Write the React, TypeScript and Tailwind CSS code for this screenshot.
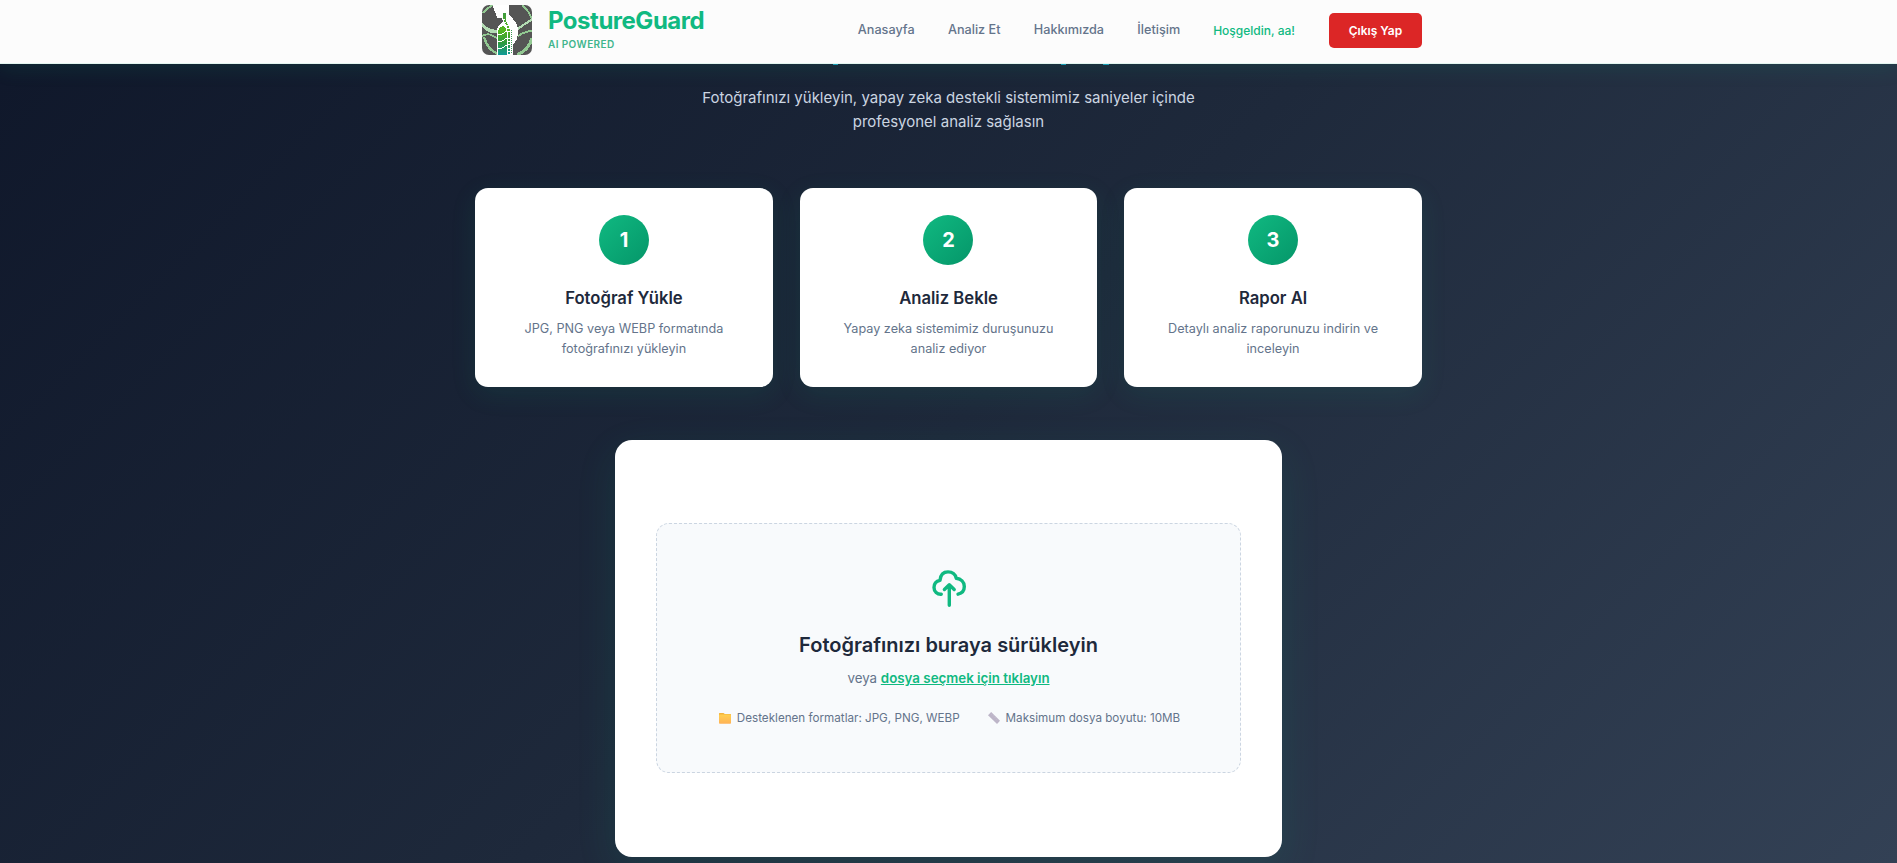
import React from 'react';

const navItems = ['Anasayfa', 'Analiz Et', 'Hakkımızda', 'İletişim'];

const steps = [
  { n: '1', title: 'Fotoğraf Yükle', lines: ['JPG, PNG veya WEBP formatında', 'fotoğrafınızı yükleyin'] },
  { n: '2', title: 'Analiz Bekle', lines: ['Yapay zeka sistemimiz duruşunuzu', 'analiz ediyor'] },
  { n: '3', title: 'Rapor Al', lines: ['Detaylı analiz raporunuzu indirin ve', 'inceleyin'] },
];

function Logo() {
  return (
    <svg className="h-[50px] w-[50px] rounded-[7px]" viewBox="0 0 50 50" shapeRendering="crispEdges">
      <defs>
        <linearGradient id="spine" gradientUnits="userSpaceOnUse" x1="0" y1="8" x2="0" y2="50">
          <stop offset="0" stopColor="#3f9a3f" />
          <stop offset="0.4" stopColor="#55b81c" />
          <stop offset="0.7" stopColor="#2f9a3c" />
          <stop offset="1" stopColor="#0f9a98" />
        </linearGradient>
      </defs>
      <rect width="50" height="50" fill="#555555" />
      <g fill="none" stroke="#92c892" strokeWidth="1.8">
        <path d="M0 31C6 28 9 29 16 34" />
        <path d="M2 32C4 40 9 46 16 49" strokeWidth="2.5" />
        <path d="M1 8C4 4 7 2 11 0" />
        <path d="M40 0C45 4 48 9 50 14" />
        <path d="M36 31C42 27 46 26 50 26" />
        <path d="M50 33C48 41 42 47 35 50" strokeWidth="3" />
      </g>
      <path d="M0 18C4 23 10 25 17 25V28H9C4 26 1 23 0 21ZM36 22C41 20 46 15 50 13V16C45 19 41 21 36 25Z" fill="#b3dcb3" />
      <path
        d="M11 0L12 5L14 9L15 13H20L21 16L17 20L15 24V50H31V40L35 34L36 28V23L34 18L31 14L28 11L27 8V0Z"
        fill="#fff"
      />
      <path d="M18 22L22 21L24 24L25 30V50H16V26Z" fill="url(#spine)" />
      <path d="M15 30L20 29L25 26M15 37L20 36L25 33M15 44L20 43L25 40" fill="none" stroke="#fff" strokeWidth="1" />
      <path d="M22.5 8V13L23.500 17L26 22L27 28V50" fill="none" stroke="url(#spine)" strokeWidth="2.200" strokeDasharray="2.500 .8" />
      <path d="M29.500 25V49" stroke="#3d9a55" strokeWidth="1" strokeDasharray="1 1" />
    </svg>
  );
}

function CloudUp() {
  return (
    <svg className="h-10 w-10" viewBox="0 0 40 40" fill="none" stroke="#10b981" strokeWidth="3.400" strokeLinecap="round" strokeLinejoin="round">
      <path d="M12.3 27.200C8.2 27.500 5 24.500 5 20.500c0-3.7 2.3-6.500 6-7.200C11.500 7.800 14.500 4.900 19 4.900c4.200 0 7.300 2.300 8.300 6.400C32 12 35.300 15.200 35.300 19.500c0 3.900-2.400 6.800-6.300 7.700" />
      <path d="M20.300 38.200V18M15.400 22.500l4.900-4.700L25.200 22.500" />
    </svg>
  );
}

function Folder() {
  return (
    <svg className="h-3 w-3" viewBox="0 0 12 12">
      <defs>
        <linearGradient id="folder" x1="0" y1="0" x2="0" y2="1">
          <stop offset="0" stopColor="#ffd04f" />
          <stop offset="1" stopColor="#ffb257" />
        </linearGradient>
      </defs>
      <path d="M0 1.500Q0 1 .5 1H4.500L5.800 2H11.500Q12 2 12 2.500V5H0Z" fill="#f3b23c" />
      <rect y="2.400" width="12" height="9.400" rx="0.800" fill="url(#folder)" />
    </svg>
  );
}

function Ruler() {
  return (
    <svg className="h-3 w-3" viewBox="0 0 12 12">
      <path d="M3.200 0L12 8.700L9 12L0 3.200Z" fill="#bdb5c8" />
      <path d="M4.300 1.600L3.300 2.600M6 3.300L5 4.300M7.700 5L6.700 6M9.400 6.600L8.400 7.600" stroke="#d0c9d8" strokeWidth=".5" />
    </svg>
  );
}

export default function App() {
  return (
    <div className="flex h-[863px] w-full flex-col overflow-hidden bg-[linear-gradient(135deg,#0f172a_0%,#1e293b_50%,#334155_100%)] font-['Inter',sans-serif]">
      <header className="relative z-10 flex h-16 shrink-0 justify-center border-b border-[#e3f6f0] bg-[#fcfcfc] shadow-[0_3px_20px_rgba(16,185,129,0.13)]">
        <div className="flex w-[947px] items-start justify-between pl-[7px]">
          <div className="flex pt-[5px]">
            <Logo />
            <div className="flex flex-col pl-4">
              <span className="pt-px text-[24px] font-bold leading-[30px] tracking-[-0.48px] text-[#10b981]">PostureGuard</span>
              <span className="pt-px text-[10px] font-semibold leading-[14px] tracking-[0.4px] text-[#40b58c]">AI POWERED</span>
            </div>
          </div>
          <nav className="flex h-[60px] items-center text-[12.670px] font-medium text-[#64748b]">
            <div className="flex gap-[33.300px] pb-px">
              {navItems.map((t) => (
                <span key={t}>{t}</span>
              ))}
            </div>
            <span className="ml-[33px] pt-px text-[12px] text-[#10b981]">Hoşgeldin, aa!</span>
            <button className="ml-[34px] mt-px h-[35px] w-[93px] rounded-[5px] bg-[#dc2626] text-center text-[12px] font-semibold text-white">Çıkış Yap</button>
          </nav>
        </div>
      </header>

      <main className="flex flex-col items-center">
        <svg className="h-[22px] w-[947px] shrink-0" viewBox="475 64 947 22" fill="#189ab8">
          <rect x="833" y="64" width="5" height="1" />
          <rect x="1061" y="64" width="5" height="1" />
          <rect x="1103" y="64" width="6" height="1" />
        </svg>
        <p className="h-[102px] text-center text-[15px] leading-6 text-[#cbd5e1]">
          Fotoğrafınızı yükleyin, yapay zeka destekli sistemimiz saniyeler içinde
          <br />
          profesyonel analiz sağlasın
        </p>

        <section className="grid w-[947px] grid-cols-3 gap-[26.670px]">
          {steps.map((s) => (
            <article key={s.n} className="flex h-[199px] flex-col items-center rounded-[13px] bg-white pt-[27px] text-center shadow-[0_7px_27px_rgba(16,185,129,0.1)]">
              <div className="flex h-[50px] w-[50px] items-center justify-center rounded-full bg-[linear-gradient(135deg,#10b981,#059669)] text-[20px] font-bold text-white">{s.n}</div>
              <h3 className="mt-[20px] text-[16.670px] font-semibold leading-[27px] text-[#1e293b]">{s.title}</h3>
              <p className="mt-[7px] text-[12.670px] leading-5 text-[#64748b]">
                {s.lines[0]}
                <br />
                {s.lines[1]}
              </p>
            </article>
          ))}
        </section>

        <section className="mt-[53px] flex h-[417px] w-[667px] items-center justify-center rounded-[17px] bg-white pb-px shadow-[0_13px_40px_rgba(16,185,129,0.12)]">
          <div className="flex h-[250px] w-[585px] flex-col items-center rounded-[13px] border border-dashed border-[#cbd5e1] bg-[#f8fafc] pt-[43px]">
            <CloudUp />
            <h2 className="mt-[22px] text-[20px] font-semibold leading-[32px] text-[#1e293b]">Fotoğrafınızı buraya sürükleyin</h2>
            <p className="mt-[6px] text-[13.330px] leading-[22px] text-[#64748b]">
              veya <span className="font-semibold text-[#10b981] underline">dosya seçmek için tıklayın</span>
            </p>
            <div className="mt-[19px] flex gap-[28px] pl-[2px] text-[11.670px] leading-5 text-[#64748b]">
              <span className="flex items-center gap-[6px]">
                <Folder />
                Desteklenen formatlar: JPG, PNG, WEBP
              </span>
              <span className="flex items-center gap-[6px]">
                <Ruler />
                Maksimum dosya boyutu: 10MB
              </span>
            </div>
          </div>
        </section>
      </main>
    </div>
  );
}
